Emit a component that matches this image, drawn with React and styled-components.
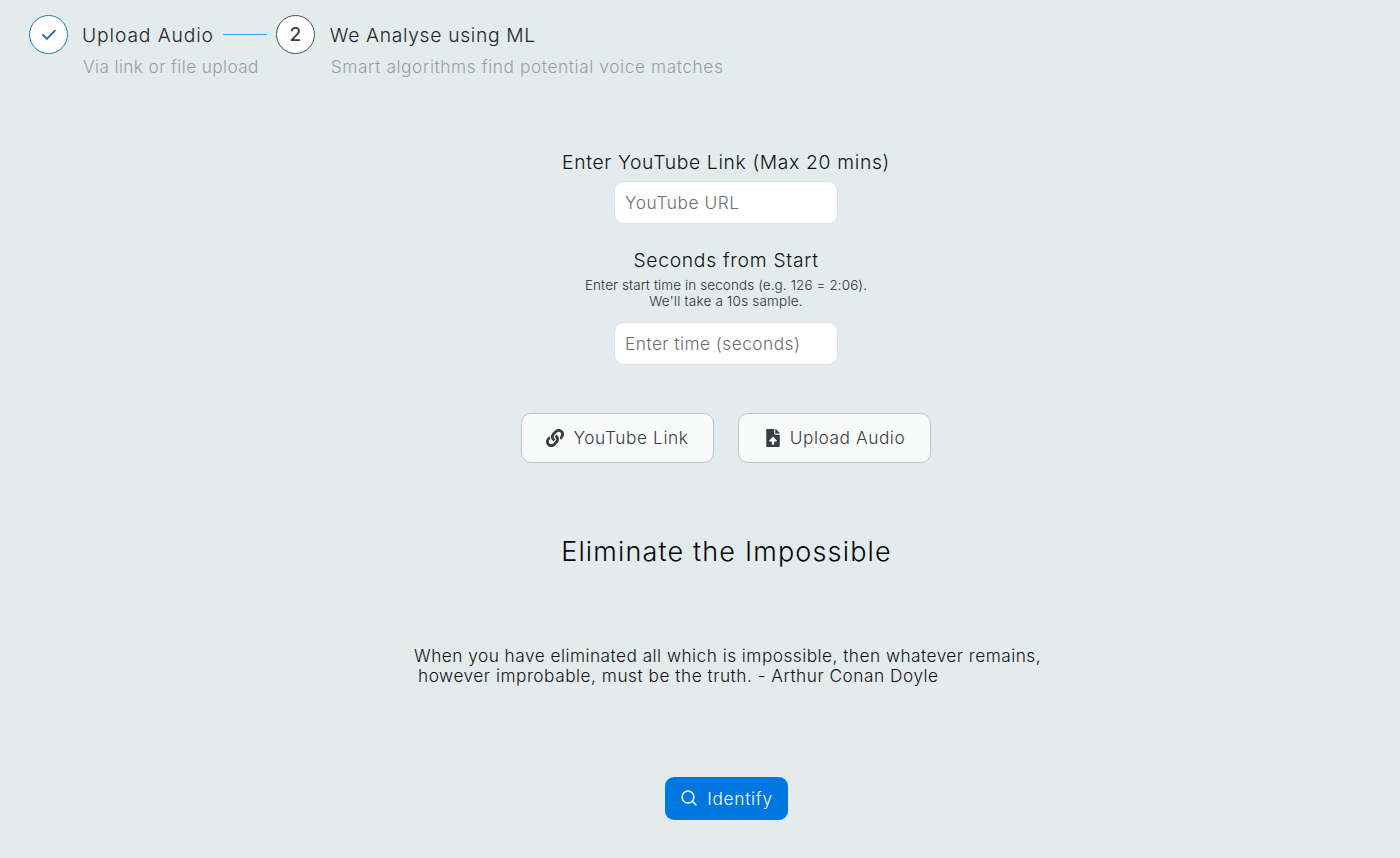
import React from "react";
import styled, { createGlobalStyle } from "styled-components";
import { FaLink, FaFileUpload } from "react-icons/fa";

const GlobalStyle = createGlobalStyle`
  *, *::before, *::after { box-sizing: border-box; }
  body {
    margin: 0;
    background: #e3ebec;
    color: #111315;
    font-family: Inter, sans-serif;
    font-weight: 300;
  }
  input, button { font: inherit; }
`;

const Page = styled.div`
  min-height: 858px;
  overflow: hidden;
`;

const Steps = styled.nav`
  display: flex;
  align-items: flex-start;
  height: 100px;
  padding: 15px 0 0 29px;
`;

const Step = styled.div`
  display: flex;
  gap: ${(p) => p.$gap}px;
`;

const StepIcon = styled.span`
  display: flex;
  align-items: center;
  justify-content: center;
  width: 39px;
  height: 39px;
  border: 1px solid ${(p) => (p.$done ? "#1f78c1" : "#4b4e50")};
  border-radius: 50%;
  background: #fff;
  color: ${(p) => (p.$done ? "#1468b3" : "#3c3f41")};
  font-size: 19px;
  font-weight: 500;
`;

const StepText = styled.div`
  display: flex;
  flex-direction: column;
  white-space: nowrap;
`;

const StepTitle = styled.div`
  display: flex;
  align-items: center;
  height: 39px;
  font-size: 19.3px;
  color: #222628;
  letter-spacing: ${(p) => p.$tracking}px;
`;

const StepNote = styled.div`
  padding-left: 1px;
  font-size: 17.3px;
  line-height: 26px;
  color: #9a9fa1;
  letter-spacing: ${(p) => p.$tracking}px;
`;

const Connector = styled.span`
  width: 44px;
  height: 1px;
  margin: 0 9px 0 9px;
  background: #3f9fe3;
`;

const Main = styled.main`
  display: flex;
  flex-direction: column;
  align-items: center;
  padding: 50px 0 0 52px;
`;

const Label = styled.label`
  font-size: 19.3px;
  line-height: 24px;
  letter-spacing: ${(p) => p.$tracking}px;
`;

const Hint = styled.p`
  margin: 6px 0 13px;
  font-size: 13.5px;
  line-height: 15.5px;
  text-align: center;
  color: #2b2f31;
`;

const HintLine = styled.span`
  display: block;
  letter-spacing: ${(p) => p.$tracking}px;
`;

const Input = styled.input`
  width: 224px;
  height: 43px;
  padding: 0 10px 1px;
  border: 1px solid #dde2e3;
  border-radius: 10px;
  background: #fff;
  font-size: 17.3px;
  letter-spacing: ${(p) => p.$tracking}px;

  &::placeholder {
    color: #6b6e70;
    opacity: 1;
  }
`;

const Field = styled.div`
  display: flex;
  flex-direction: column;
  align-items: center;
  margin-bottom: ${(p) => p.$after}px;

  ${Label} + ${Input} {
    margin-top: 7px;
  }
`;

const Sources = styled.div`
  display: flex;
  gap: 24px;
`;

const SourceButton = styled.button`
  display: flex;
  align-items: center;
  justify-content: center;
  gap: ${(p) => p.$gap}px;
  width: 193px;
  height: 50px;
  padding: 0 0 1px;
  border: 1px solid #bfc6c8;
  border-radius: 10px;
  background: #f9fafa;
  color: #3a3d3f;
  font-size: 17.3px;
  letter-spacing: ${(p) => p.$tracking}px;
`;

const Heading = styled.h1`
  margin: 72px 0 0;
  padding-left: 1px;
  font-size: 27px;
  font-weight: 300;
  line-height: 34px;
  letter-spacing: 1.16px;
  color: #050606;
`;

const Quote = styled.p`
  width: 626px;
  margin: 77px 0 0;
  padding-left: 1px;
  font-size: 17.3px;
  line-height: 20px;
  white-space: pre;
`;

const QuoteLine = styled.span`
  display: block;
  padding-left: ${(p) => p.$indent || 0}px;
  letter-spacing: ${(p) => p.$tracking}px;
`;

const IdentifyButton = styled.button`
  display: flex;
  align-items: center;
  justify-content: center;
  gap: 10px;
  width: 123px;
  height: 43px;
  margin-top: 91px;
  padding: 0 0 1px 2px;
  border: 0;
  border-radius: 9px;
  background: #0076e0;
  color: #fff;
  font-size: 17.3px;
  letter-spacing: 0.7px;
`;

const CheckIcon = () => (
  <svg
    width="14"
    height="12"
    viewBox="0 0 14 12"
    fill="none"
    stroke="currentColor"
    strokeWidth="1.8"
    strokeLinecap="round"
    strokeLinejoin="round"
  >
    <path d="M1 5.9 4.9 9.9 12.9 1.6" />
  </svg>
);

const SearchIcon = () => (
  <svg
    width="16"
    height="16"
    viewBox="0 0 16 16"
    fill="none"
    stroke="currentColor"
    strokeWidth="1.5"
    strokeLinecap="round"
  >
    <circle cx="7" cy="7" r="5.9" />
    <path d="m11.3 11.3 3.6 3.6" />
  </svg>
);

export default function App() {
  return (
    <Page>
      <GlobalStyle />
      <Steps>
        <Step $gap={14}>
          <StepIcon $done>
            <CheckIcon />
          </StepIcon>
          <StepText>
            <StepTitle $tracking={0.87}>
              Upload Audio
              <Connector />
            </StepTitle>
            <StepNote $tracking={0.37}>Via link or file upload</StepNote>
          </StepText>
        </Step>
        <Step $gap={15}>
          <StepIcon>2</StepIcon>
          <StepText>
            <StepTitle $tracking={0.66}>We Analyse using ML</StepTitle>
            <StepNote $tracking={0.59}>
              Smart algorithms find potential voice matches
            </StepNote>
          </StepText>
        </Step>
      </Steps>

      <Main>
        <Field $after={24}>
          <Label htmlFor="url" $tracking={0.66}>
            Enter YouTube Link (Max 20 mins)
          </Label>
          <Input id="url" placeholder="YouTube URL" $tracking={0.57} />
        </Field>

        <Field $after={48}>
          <Label htmlFor="start" $tracking={0.71}>
            Seconds from Start
          </Label>
          <Hint>
            <HintLine $tracking={0.1}>
              Enter start time in seconds (e.g. 126 = 2:06).
            </HintLine>
            <HintLine $tracking={0.2}>We'll take a 10s sample.</HintLine>
          </Hint>
          <Input id="start" placeholder="Enter time (seconds)" $tracking={0.47} />
        </Field>

        <Sources>
          <SourceButton $gap={9} $tracking={0.59}>
            <FaLink size={18} />
            YouTube Link
          </SourceButton>
          <SourceButton $gap={8} $tracking={0.56}>
            <FaFileUpload size={18} />
            Upload Audio
          </SourceButton>
        </Sources>

        <Heading>Eliminate the Impossible</Heading>

        <Quote>
          <QuoteLine $tracking={0.46}>
            When you have eliminated all which is impossible, then whatever remains,
          </QuoteLine>
          <QuoteLine $indent={4} $tracking={0.5}>
            however improbable, must be the truth. - Arthur Conan Doyle
          </QuoteLine>
        </Quote>

        <IdentifyButton>
          <SearchIcon />
          Identify
        </IdentifyButton>
      </Main>
    </Page>
  );
}
